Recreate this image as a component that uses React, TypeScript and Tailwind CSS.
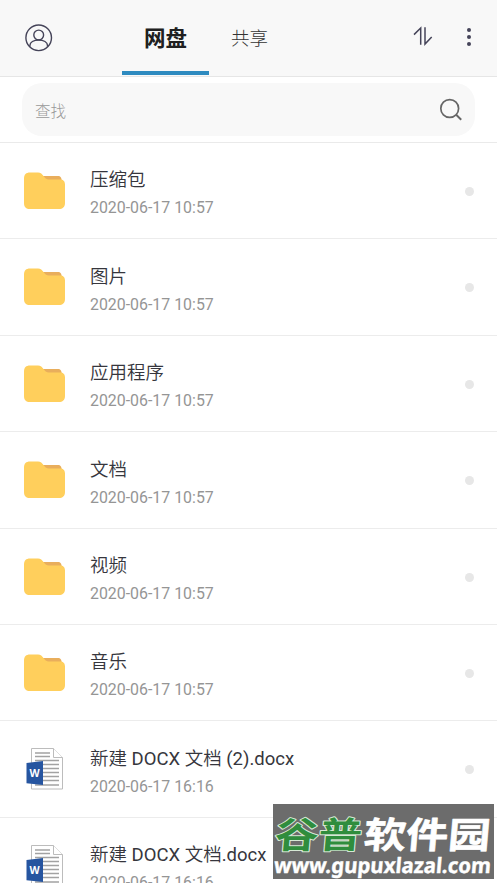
const folders = ["压缩包", "图片", "应用程序", "文档", "视频", "音乐"];
const documents = ["新建 DOCX 文档 (2).docx", "新建 DOCX 文档.docx"];

const files = [
  ...folders.map((name) => ({ name, date: "2020-06-17 10:57", type: "folder" })),
  ...documents.map((name) => ({ name, date: "2020-06-17 16:16", type: "word" })),
];

function UserIcon() {
  return (
    <svg className="h-7 w-7" viewBox="0 0 28 28" fill="none" stroke="#454459" strokeWidth="1.4">
      <circle cx="13.7" cy="13.8" r="12.8" />
      <circle cx="13.7" cy="11" r="4.9" />
      <path d="M4.9 22.7v-1.2c0-3.3 3.8-5.5 8.8-5.5s8.8 2.2 8.8 5.5v1.2" />
    </svg>
  );
}

function SortIcon() {
  return (
    <svg className="h-5 w-5" viewBox="0 0 20 20" fill="none" stroke="#454459" strokeWidth="1.5">
      <path d="M1 8.6 7.7 2v16.7M12 1.3V18l6.7-7.1" />
    </svg>
  );
}

function SearchIcon() {
  return (
    <svg className="h-6 w-6" viewBox="0 0 24 24" fill="none" stroke="#666" strokeWidth="1.7">
      <circle cx="10.7" cy="10.5" r="8.9" />
      <path d="m17.2 16.8 5 5" strokeWidth="2" />
    </svg>
  );
}

function FolderIcon() {
  return (
    <svg className="h-[38px] w-[43px]" viewBox="0 0 43 38">
      <path d="M18 4h17c2.500 0 3.500 1.500 4 6H21z" fill="#e9ae5c" />
      <path
        d="M7 .4h8c5.500 0 5.500 7 11 7h11c3.500 0 5 2 5 5V31c0 4-2.500 6-6 6H7c-4 0-6-2-6-6V6.400c0-4 2-6 6-6Z"
        fill="#ffcf5c"
      />
    </svg>
  );
}

function WordIcon() {
  return (
    <svg className="h-[42px] w-[38px]" viewBox="0 0 38 42">
      <path d="M5.5.5h22l9 9V41h-31z" fill="#fff" stroke="#bcbcbc" />
      <path d="M27.5.5v9h9" fill="#fff" stroke="#bcbcbc" />
      <path
        d="M9 5h15M9 8.5h15M9 12.5h24M15 16.5h18M15 20.5h18M15 24.5h18M15 28.5h18M15 32.5h18M9 37h24"
        stroke="#a2a2a2"
        strokeWidth="1.4"
      />
      <path d="m.5 15 16.5-2v24L.5 35.2z" fill="#2655a0" />
      <text
        x="8.7"
        y="29"
        textAnchor="middle"
        fill="#fff"
        fontSize="10.5"
        fontWeight="700"
        fontFamily="'Open Sans', sans-serif"
      >
        W
      </text>
    </svg>
  );
}

function Watermark() {
  return (
    <div className="absolute top-[804px] left-[273px] h-[75px] w-[221px] bg-[#6c6c6c]">
      <svg
        className="block h-full w-full"
        viewBox="0 0 221 75"
        fontWeight="700"
        fontFamily="'Noto Sans CJK SC', sans-serif"
      >
        <g transform="translate(0 43.5) skewX(-5)" strokeLinejoin="round">
          <text
            transform="translate(1 0) scale(1.21 1)"
            fontSize="36"
            fill="#2f8d3d"
            stroke="#d6e8d5"
            strokeWidth="2"
            paintOrder="stroke"
          >
            谷普
          </text>
          <text
            transform="translate(90 0) scale(1.17 1)"
            fontSize="36"
            fill="#fff"
            stroke="#fff"
            strokeWidth="0.6"
          >
            软件园
          </text>
        </g>
        <text
          transform="translate(0.5 69) skewX(-5)"
          textLength="217"
          lengthAdjust="spacingAndGlyphs"
          fill="#fff"
          stroke="#fff"
          strokeWidth="0.4"
          fontSize="21"
          fontFamily="'Noto Sans', sans-serif"
        >
          www.gupuxlazal.com
        </text>
      </svg>
    </div>
  );
}

export default function App() {
  return (
    <div className="relative h-[883px] w-full overflow-hidden bg-white font-['Roboto','Noto_Sans_CJK_SC',sans-serif]">
      <header className="flex h-[77px] border-b border-[#e6e6e6] bg-[#f8f8f8] pl-[25px]">
        <div className="w-[97px] pt-6">
          <UserIcon />
        </div>
        <nav className="flex">
          <div className="h-[75px] w-[87px] border-b-4 border-[#2e8bc0] pt-[23px] text-center text-[21.5px] leading-8 font-bold text-[#202020]">
            网盘
          </div>
          <div className="w-[81px] pt-[23px] text-center text-[18.5px] leading-8 font-light text-[#333]">
            共享
          </div>
        </nav>
        <div className="ml-auto flex gap-[34px] pt-[26px] pr-[26px]">
          <SortIcon />
          <div className="flex w-1 flex-col gap-[3px] pt-0.5">
            <span className="h-1 w-1 rounded-full bg-[#454459]" />
            <span className="h-1 w-1 rounded-full bg-[#454459]" />
            <span className="h-1 w-1 rounded-full bg-[#454459]" />
          </div>
        </div>
      </header>

      <div className="h-[66px] border-b border-[#eaeaea] px-[22px] pt-1.5">
        <div className="flex h-[53px] items-center justify-between rounded-[20px] bg-[#f8f8f8] pr-3 pl-[13px]">
          <span className="pt-1.5 text-[15.5px] font-light text-[#999]">查找</span>
          <SearchIcon />
        </div>
      </div>

      <ul>
        {files.map(({ name, date, type }) => (
          <li key={name} className="flex h-[96.4px] border-b border-[#ececec] pr-[23px] pl-[23px]">
            <div className="w-[67px] pt-[29px]">
              {type === "folder" ? (
                <FolderIcon />
              ) : (
                <div className="-mt-0.5 pl-[3px]">
                  <WordIcon />
                </div>
              )}
            </div>
            <div className="flex-1 pt-[23.4px]">
              <p className="font-['Roboto','Noto_Sans_CJK_SC_DemiLight','Noto_Sans_CJK_SC_Light','Noto_Sans_CJK_SC',sans-serif] text-[18.5px] leading-7 whitespace-nowrap text-[#36363d]">
                {name}
              </p>
              <p className="text-[15.9px] leading-7 text-[#959595]">{date}</p>
            </div>
            <span className="mt-11 h-[9px] w-[9px] rounded-full bg-[#e7e7e7]" />
          </li>
        ))}
      </ul>

      <Watermark />
    </div>
  );
}
